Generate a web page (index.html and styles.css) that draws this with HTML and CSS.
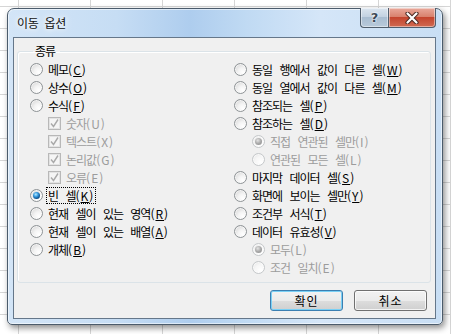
FILE: index.html
```html
<!DOCTYPE html>
<html lang="ko">
  <head>
    <meta charset="UTF-8" />
    <meta name="viewport" content="width=device-width, initial-scale=1.0" />
    <title>이동 옵션</title>
    <link rel="stylesheet" href="styles.css">
  </head>
  <body>
    <div class="dialog">
      <div class="titlebar">
        <span class="title">이동 옵션</span>
        <div class="caption-btns">
          <span class="cbtn help">?</span>
          <span class="cbtn close">
            <svg width="14" height="12" viewBox="0 0 14 12">
              <path d="M2.5 1.5 L11.5 10.5 M11.5 1.5 L2.5 10.5" stroke="#4a2a24" stroke-width="4.2" stroke-linecap="round" fill="none" />
              <path d="M2.5 1.5 L11.5 10.5 M11.5 1.5 L2.5 10.5" stroke="#fff" stroke-width="2.2" stroke-linecap="round" fill="none" />
            </svg>
          </span>
        </div>
      </div>

      <div class="client">
        <fieldset class="group">
          <legend>종류</legend>
          <div class="cols">
            <div class="col">
              <div class="opt"><span class="radio"></span><span class="label">메모<span class="key">(<u>C</u>)</span></span></div>
              <div class="opt"><span class="radio"></span><span class="label">상수<span class="key">(<u>O</u>)</span></span></div>
              <div class="opt"><span class="radio"></span><span class="label">수식<span class="key">(<u>F</u>)</span></span></div>
              <div class="opt sub off"><span class="check"><svg width="11" height="11" viewBox="0 0 11 11"><path d="M2 5.5 L4.5 8.5 L9 1.5" stroke="#a9a9a9" stroke-width="1.4" fill="none" /></svg></span><span class="label">숫자<span class="key">(U)</span></span></div>
              <div class="opt sub off"><span class="check"><svg width="11" height="11" viewBox="0 0 11 11"><path d="M2 5.5 L4.5 8.5 L9 1.5" stroke="#a9a9a9" stroke-width="1.4" fill="none" /></svg></span><span class="label">텍스트<span class="key">(X)</span></span></div>
              <div class="opt sub off"><span class="check"><svg width="11" height="11" viewBox="0 0 11 11"><path d="M2 5.5 L4.5 8.5 L9 1.5" stroke="#a9a9a9" stroke-width="1.4" fill="none" /></svg></span><span class="label">논리값<span class="key">(G)</span></span></div>
              <div class="opt sub off"><span class="check"><svg width="11" height="11" viewBox="0 0 11 11"><path d="M2 5.5 L4.5 8.5 L9 1.5" stroke="#a9a9a9" stroke-width="1.4" fill="none" /></svg></span><span class="label">오류<span class="key">(E)</span></span></div>
              <div class="opt"><span class="radio on"></span><span class="label focus">빈 셀<span class="key">(<u>K</u>)</span></span></div>
              <div class="opt"><span class="radio"></span><span class="label">현재 셀이 있는 영역<span class="key">(<u>R</u>)</span></span></div>
              <div class="opt"><span class="radio"></span><span class="label">현재 셀이 있는 배열<span class="key">(<u>A</u>)</span></span></div>
              <div class="opt"><span class="radio"></span><span class="label">개체<span class="key">(<u>B</u>)</span></span></div>
            </div>
            <div class="col">
              <div class="opt"><span class="radio"></span><span class="label">동일 행에서 값이 다른 셀<span class="key">(<u>W</u>)</span></span></div>
              <div class="opt"><span class="radio"></span><span class="label">동일 열에서 값이 다른 셀<span class="key">(<u>M</u>)</span></span></div>
              <div class="opt"><span class="radio"></span><span class="label">참조되는 셀<span class="key">(<u>P</u>)</span></span></div>
              <div class="opt"><span class="radio"></span><span class="label">참조하는 셀<span class="key">(<u>D</u>)</span></span></div>
              <div class="opt sub off"><span class="radio on"></span><span class="label">직접 연관된 셀만<span class="key">(I)</span></span></div>
              <div class="opt sub off"><span class="radio"></span><span class="label">연관된 모든 셀<span class="key">(L)</span></span></div>
              <div class="opt"><span class="radio"></span><span class="label">마지막 데이터 셀<span class="key">(<u>S</u>)</span></span></div>
              <div class="opt"><span class="radio"></span><span class="label">화면에 보이는 셀만<span class="key">(<u>Y</u>)</span></span></div>
              <div class="opt"><span class="radio"></span><span class="label">조건부 서식<span class="key">(<u>T</u>)</span></span></div>
              <div class="opt"><span class="radio"></span><span class="label">데이터 유효성<span class="key">(<u>V</u>)</span></span></div>
              <div class="opt sub off"><span class="radio on"></span><span class="label">모두<span class="key">(L)</span></span></div>
              <div class="opt sub off"><span class="radio"></span><span class="label">조건 일치<span class="key">(E)</span></span></div>
            </div>
          </div>
        </fieldset>

        <div class="actions">
          <button class="btn default">확인</button>
          <button class="btn">취소</button>
        </div>
      </div>
    </div>
  </body>
</html>
```

FILE: styles.css
```css
body {
  margin: 0;
  width: 451px;
  height: 334px;
  overflow: hidden;
  font-family: "Noto Sans CJK KR", sans-serif;
  background-color: #fff;
  background-image: linear-gradient(to right, #d6d6d6 1px, transparent 1px),
    linear-gradient(to bottom, #d6d6d6 1px, transparent 1px);
  background-size: 72px 100%, 100% 22px;
  background-position: 18px 0, 0 6px;
}

.dialog {
  margin: 8px 0 0 7px;
  width: 436px;
  height: 317px;
  box-sizing: border-box;
  display: flex;
  flex-direction: column;
  border: 1px solid #4b5b6b;
  border-radius: 7px 7px 5px 5px;
  background: linear-gradient(to right, #d3e5f7 0%, #c6ddf4 25%, #aecdee 42%, #c0daf3 55%, #d5e6f8 72%, #c8def4 100%);
  box-shadow: inset 0 0 0 1px rgba(255, 255, 255, 0.55), 2px 3px 6px rgba(0, 0, 0, 0.45);
}

/* title bar */
.titlebar {
  height: 28px;
  display: flex;
  align-items: flex-start;
}

.title {
  margin: 6px 0 0 9px;
  font-size: 12px;
  line-height: 16px;
  color: #111;
  letter-spacing: -0.3px;
  word-spacing: 3px;
  text-shadow: 0 0 5px #fff, 0 0 8px rgba(255, 255, 255, 0.9);
}

.caption-btns {
  margin: -1px 6px 0 auto;
  display: flex;
}

.cbtn {
  height: 20px;
  box-sizing: border-box;
  border: 1px solid #4f5d6c;
  border-top: none;
  display: flex;
  align-items: center;
  justify-content: center;
  box-shadow: inset 0 0 0 1px rgba(255, 255, 255, 0.45);
}

.help {
  width: 28px;
  border-radius: 0 0 0 4px;
  border-right: none;
  background: linear-gradient(to bottom, #dbe5ef 0%, #c3d2e1 45%, #a9bdd1 50%, #b8cadb 100%);
  font-family: "DejaVu Sans", sans-serif;
  font-weight: bold;
  font-size: 13px;
  color: #3d4956;
  text-shadow: 0 0 2px #fff, 0 0 2px #fff;
}

.close {
  width: 48px;
  border-radius: 0 0 4px 0;
  background: linear-gradient(to bottom, #e9a99b 0%, #d9826e 45%, #c4452e 50%, #d06a52 100%);
}

/* client area */
.client {
  flex: 1;
  margin: 0 6px 5px 5px;
  border: 1px solid #65778a;
  background: #f0f0f0;
  display: flex;
  flex-direction: column;
}

.group {
  margin: 5px 4px 0 3px;
  padding: 1px 0 6px 12px;
  border: 1px solid #dbe3e8;
  border-radius: 3px;
  box-shadow: inset 1px 1px 0 #fff;
}

.group legend {
  margin-left: 3px;
  padding: 0 5px 0 2px;
  font-size: 12px;
  line-height: 16px;
  letter-spacing: -1px;
}

.cols {
  display: grid;
  grid-template-columns: 204px 1fr;
}

.opt {
  height: 18px;
  display: flex;
  align-items: center;
  gap: 4px;
  font-size: 12px;
  color: #000;
}

.opt.sub {
  padding-left: 18px;
}

.opt.off {
  color: #9c9c9c;
}

.label {
  line-height: 15px;
  padding: 0 1px;
  letter-spacing: -1px;
  word-spacing: 5px;
  white-space: nowrap;
}

.label.focus {
  outline: 1px dotted #000;
  outline-offset: 0;
}

.key {
  letter-spacing: 1px;
}

.radio {
  width: 13px;
  height: 13px;
  box-sizing: border-box;
  flex: none;
  position: relative;
  border-radius: 50%;
  border: 1px solid #8e9396;
  background: radial-gradient(circle at 70% 75%, #fff 0%, #f3f3f3 40%, #cfcfcf 100%);
  box-shadow: inset 0 0 0 1px rgba(255, 255, 255, 0.6);
}

.radio.on::after {
  content: "";
  position: absolute;
  inset: 2px;
  border-radius: 50%;
  background: radial-gradient(circle at 40% 35%, #b8ecff 0%, #3a9ce0 35%, #115896 65%, #0b2f55 100%);
}

.off .radio {
  border-color: #c5c8ca;
  background: radial-gradient(circle at 70% 75%, #fff 0%, #f6f6f6 50%, #e2e2e2 100%);
}

.off .radio.on::after {
  background: radial-gradient(circle at 40% 35%, #e4e4e4 0%, #a9a9a9 50%, #8a8a8a 100%);
}

.check {
  width: 13px;
  height: 13px;
  box-sizing: border-box;
  flex: none;
  border: 1px solid #b8b8b8;
  background: #f5f5f5;
  box-shadow: inset 0 0 0 1px #e3e3e3;
  display: flex;
  align-items: center;
  justify-content: center;
}

/* buttons */
.actions {
  display: flex;
  justify-content: flex-end;
  gap: 11px;
  margin: 7px 8px 0 0;
}

.btn {
  width: 73px;
  height: 21px;
  padding: 0;
  border: 1px solid #707070;
  border-radius: 3px;
  background: linear-gradient(to bottom, #f2f2f2 0%, #ebebeb 50%, #dddddd 51%, #cfcfcf 100%);
  box-shadow: inset 0 0 0 1px rgba(255, 255, 255, 0.75);
  font-family: "Noto Sans CJK KR", sans-serif;
  font-size: 12px;
  letter-spacing: 1px;
  color: #000;
}

.btn.default {
  border-color: #3c7fb1;
  box-shadow: inset 0 0 0 1px #7ad0f5;
}
```
